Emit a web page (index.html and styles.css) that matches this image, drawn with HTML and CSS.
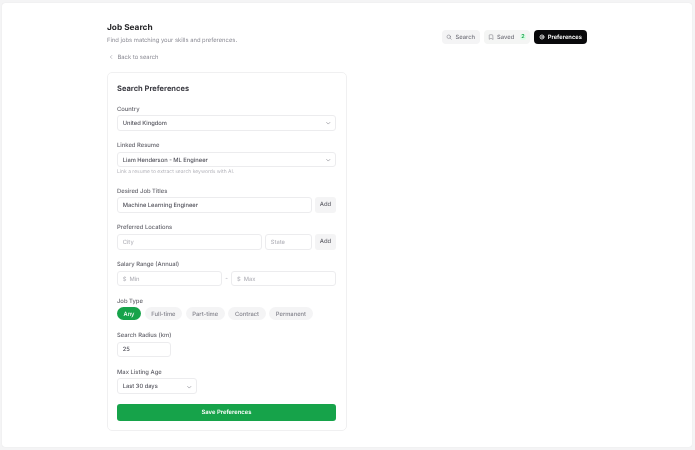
FILE: index.html
```html
<!DOCTYPE html>
<html lang="en">
<head>
<meta charset="utf-8">
<title>Job Search</title>
<link rel="stylesheet" href="styles.css">
</head>
<body>
<main class="panel">
  <div class="content">
    <header class="top">
      <div class="heading">
        <h1>Job Search</h1>
        <p>Find jobs matching your skills and preferences.</p>
      </div>
      <nav class="tabs">
        <a class="tab"><svg class="ico" viewBox="0 0 24 24"><circle cx="11" cy="11" r="7"/><path d="M21 21l-4.3-4.3"/></svg>Search</a>
        <a class="tab tab-saved"><svg class="ico" viewBox="0 0 24 24"><path d="M19 21l-7-4-7 4V5a2 2 0 0 1 2-2h10a2 2 0 0 1 2 2z"/></svg>Saved<span class="badge">2</span></a>
        <a class="tab tab-active"><svg class="ico" viewBox="0 0 24 24"><circle cx="12" cy="12" r="3"/><path d="M12 2v3M12 19v3M2 12h3M19 12h3M4.9 4.9L7 7M17 17l2.1 2.1M4.9 19.1L7 17M17 7l2.1-2.1"/><circle cx="12" cy="12" r="7.5"/></svg>Preferences</a>
      </nav>
    </header>
    <a class="back"><svg class="ico" viewBox="0 0 24 24"><path d="M15 18l-6-6 6-6"/></svg>Back to search</a>
    <section class="card">
      <h2>Search Preferences</h2>
      <div class="field">
        <label>Country</label>
        <div class="control select"><span>United Kingdom</span><svg class="chev" viewBox="0 0 24 24"><path d="M6 9l6 6 6-6"/></svg></div>
      </div>
      <div class="field">
        <label>Linked Resume</label>
        <div class="control select"><span>Liam Henderson - ML Engineer</span><svg class="chev" viewBox="0 0 24 24"><path d="M6 9l6 6 6-6"/></svg></div>
        <small>Link a resume to extract search keywords with AI.</small>
      </div>
      <div class="field">
        <label>Desired Job Titles</label>
        <div class="row">
          <div class="control grow"><span>Machine Learning Engineer</span></div>
          <button class="add">Add</button>
        </div>
      </div>
      <div class="field">
        <label>Preferred Locations</label>
        <div class="row">
          <div class="control grow ph"><span>City</span></div>
          <div class="control state ph"><span>State</span></div>
          <button class="add">Add</button>
        </div>
      </div>
      <div class="field">
        <label>Salary Range (Annual)</label>
        <div class="row salary">
          <div class="control grow ph"><span class="cur">$</span><span>Min</span></div>
          <span class="dash">-</span>
          <div class="control grow ph"><span class="cur">$</span><span>Max</span></div>
        </div>
      </div>
      <div class="field">
        <label>Job Type</label>
        <div class="pills">
          <span class="pill pill-on">Any</span>
          <span class="pill">Full-time</span>
          <span class="pill">Part-time</span>
          <span class="pill">Contract</span>
          <span class="pill">Permanent</span>
        </div>
      </div>
      <div class="field">
        <label>Search Radius (km)</label>
        <div class="control radius"><span>25</span></div>
      </div>
      <div class="field">
        <label>Max Listing Age</label>
        <div class="control select age"><span>Last 30 days</span><svg class="chev" viewBox="0 0 24 24"><path d="M6 9l6 6 6-6"/></svg></div>
      </div>
      <button class="save">Save Preferences</button>
    </section>
  </div>
</main>
</body>
</html>
```

FILE: styles.css
```css
* { box-sizing: border-box; }
html, body { height: 100%; }
body {
  margin: 0;
  padding: 3px 3px 3px 2px;
  background: #f4f4f5;
  font-family: Inter, "Liberation Sans", sans-serif;
  color: #27272a;
  overflow: hidden;
  text-rendering: geometricPrecision;
}
.panel {
  height: 444px;
  background: #fff;
  border-radius: 3px;
  box-shadow: 0 0 1px rgba(0,0,0,.12);
  padding-top: 19px;
  display: flex;
  justify-content: center;
}
.content { width: 480px; margin-left: 4px; margin-right: 4px; will-change: transform; }
.top { display: flex; justify-content: space-between; align-items: flex-start; height: 27px; }
h1 { margin: 0; font-size: 8.3px; line-height: 12px; font-weight: 680; color: #27272a; }
.heading p { margin: 0; padding-top: 1px; font-size: 5.85px; line-height: 11px; color: #8b8b94; }
.tabs { display: flex; gap: 4px; padding-top: 8px; }
.tab {
  display: flex; align-items: center; gap: 3px;
  height: 14px; padding: 0 4.5px;
  border-radius: 4px;
  background: #f4f4f5;
  font-size: 5.85px; font-weight: 500; color: #71717a;
}
.tab-saved { background: #f4f5f4; padding-right: 3.5px; }
.tab-active { background: #09090b; color: #fff; padding: 0 5px; font-weight: 600; }
.badge {
  margin-left: 2.5px; padding: 0 1.5px;
  font-size: 5.4px; font-weight: 600;
  color: #16a34a; background: #dcfce7; border-radius: 2px;
}
.ico { width: 6px; height: 6px; fill: none; stroke: currentColor; stroke-width: 2; stroke-linecap: round; stroke-linejoin: round; flex: none; }
.back { display: flex; align-items: center; gap: 4px; height: 9px; margin-top: 3.5px; font-size: 5.85px; color: #8b8b94; }
.back .ico { margin-left: 0.5px; }
.card {
  margin-top: 10px;
  width: 239.5px; height: 359px;
  padding: 10px 9.5px 9px 9px;
  border: 1px solid #f0f0f1;
  border-radius: 5px;
  display: flex; flex-direction: column; gap: 9.7px;
}
h2 { margin: 0 0 0.4px; font-size: 7.5px; line-height: 11px; font-weight: 650; color: #3f3f46; }
.field { display: flex; flex-direction: column; }
label { font-size: 5.85px; line-height: 11px; font-weight: 500; color: #63636b; margin-bottom: 0.5px; }
.control {
  display: flex; align-items: center;
  height: 15.6px; padding: 1px 4.7px 0;
  border: 1px solid #ececee;
  border-radius: 3px;
  background: #fff;
  font-size: 5.75px; font-weight: 450; color: #52525b;
}
.select { justify-content: space-between; padding-right: 4px; }
.chev { width: 6.5px; height: 6.5px; fill: none; stroke: #71717a; stroke-width: 2; stroke-linecap: round; stroke-linejoin: round; }
small { display: block; margin-top: 2px; font-size: 5px; line-height: 6.5px; color: #b4b4bb; }
.row { display: flex; gap: 3.5px; align-items: stretch; }
.grow { flex: 1 1 0; min-width: 0; }
.state { width: 46.5px; }
.ph { color: #b4b4bb; }
.cur { margin-right: 3px; }
.add {
  width: 21px; padding: 0; border: 0; border-radius: 3px;
  background: #f4f4f5; color: #63636b;
  font: 500 5.85px Inter, "Liberation Sans", sans-serif;
  text-rendering: geometricPrecision;
}
.salary { align-items: center; gap: 3.5px; }
.dash { font-size: 5.85px; color: #a1a1aa; }
.pills { display: flex; gap: 3.6px; }
.pill {
  display: flex; align-items: center;
  height: 13px; padding: 1px 6.6px 0;
  border-radius: 7px;
  background: #f4f4f5;
  font-size: 5.8px; font-weight: 500; color: #82828b;
}
.pill-on { background: #16a34a; color: #fff; }
.radius { width: 53.5px; }
.age { width: 80px; }
.save {
  height: 17px; margin-top: 0.4px; padding: 0; border: 0; border-radius: 3px;
  background: #16a34a; color: #fff;
  font: 600 5.9px Inter, "Liberation Sans", sans-serif;
  text-rendering: geometricPrecision;
}
```
